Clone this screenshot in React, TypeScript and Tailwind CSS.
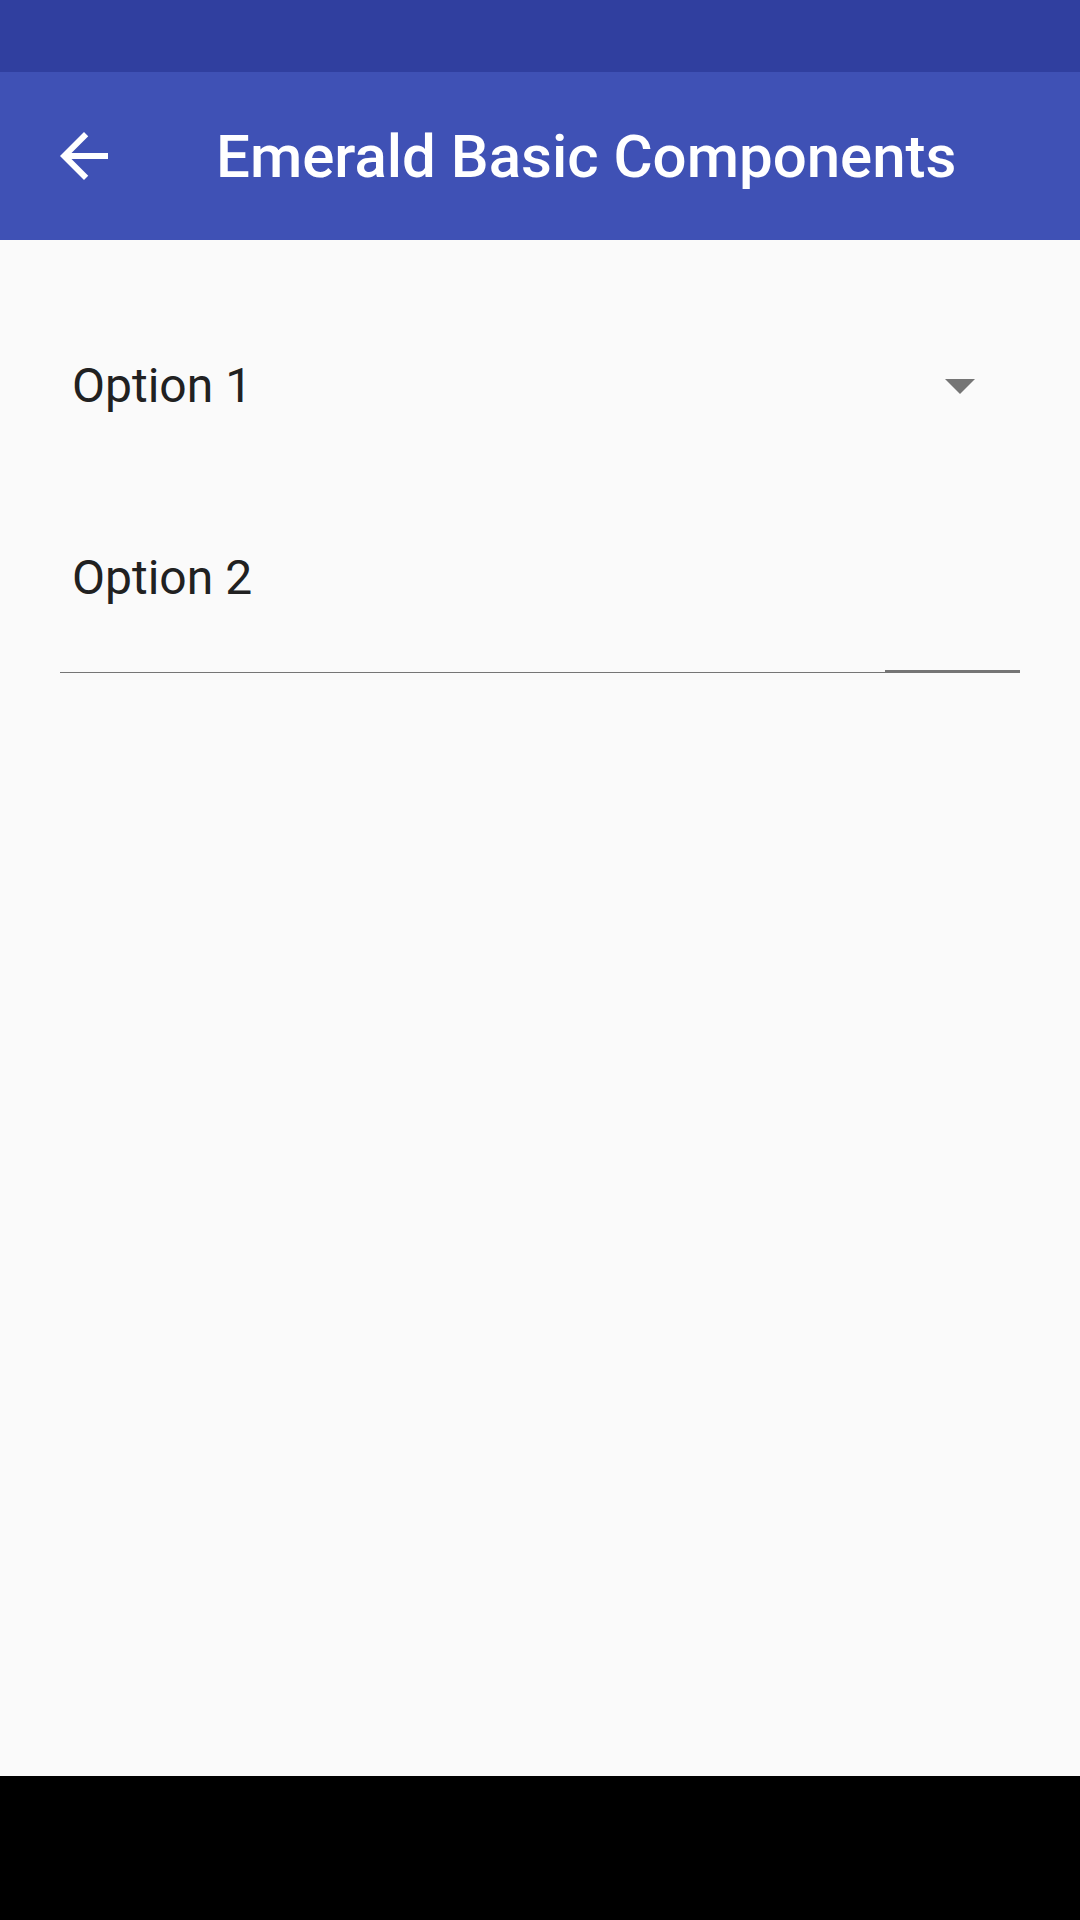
export default function App() {
  return (
    <div className="w-[1080px] h-[1920px] flex flex-col bg-[#fafafa] font-['Roboto',sans-serif]">
      {/* Status bar */}
      <div className="h-[72px] shrink-0 bg-[#303f9f]" />

      {/* Toolbar */}
      <header className="h-[168px] shrink-0 bg-[#3f51b5] flex items-center">
        <button className="w-[72px] h-[72px] ml-[48px] flex items-center justify-center">
          <svg width="72" height="72" viewBox="0 0 24 24" fill="#ffffff">
            <path d="M20 11H7.83l5.59-5.59L12 4l-8 8 8 8 1.41-1.41L7.83 13H20v-2z" />
          </svg>
        </button>
        <h1 className="ml-[96px] mt-[2px] text-[60px] leading-[70px] font-medium text-white">
          Emerald Basic Components
        </h1>
      </header>

      {/* Content */}
      <main className="flex-1 px-[60px]">
        <div className="mt-[118px] flex items-center justify-between pl-[12px] pr-[45px]">
          <span className="text-[48px] leading-[56px] text-[#212121]">Option 1</span>
          <svg width="30" height="15" viewBox="0 0 30 15">
            <path d="M0 0h30L15 15z" fill="#757575" />
          </svg>
        </div>

        <div className="mt-[136px] pl-[12px]">
          <span className="text-[48px] leading-[56px] text-[#212121]">Option 2</span>
        </div>

        <div className="mt-[64px] flex items-end h-[3px]">
          <div className="flex-1 h-px bg-[#757575]" />
          <div className="w-[135px] h-[3px] bg-[#757575]" />
        </div>
      </main>

      {/* Navigation bar */}
      <div className="h-[144px] shrink-0 bg-black" />
    </div>
  );
}
